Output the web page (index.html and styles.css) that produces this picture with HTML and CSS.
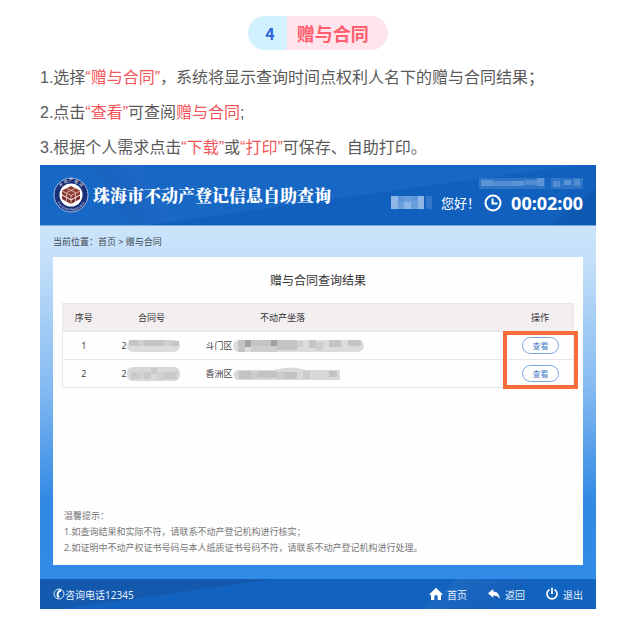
FILE: index.html
```html
<!DOCTYPE html>
<html lang="zh-CN">
<head>
<meta charset="utf-8">
<meta name="viewport" content="width=device-width, initial-scale=1">
<title>赠与合同</title>
<link rel="stylesheet" href="styles.css">
</head>
<body>
<main class="article">
  <h1 class="step"><span class="step-number">4</span><span class="step-name">赠与合同</span></h1>
  <div class="steps">
    <p>1.选择<em>“赠与合同”</em>，系统将显示查询时间点权利人名下的赠与合同结果；</p>
    <p>2.点击<em>“查看”</em>可查阅<em>赠与合同</em>;</p>
    <p>3.根据个人需求点击<em>“下载”</em>或<em>“打印”</em>可保存、自助打印。</p>
  </div>

  <section class="kiosk">
    <header class="topbar">
      <svg class="emblem" viewBox="0 0 36 36" aria-hidden="true">
        <defs>
          <path id="arc-top" d="M5.2 19.500a12.900 12.900 0 1 1 25.600 0"/>
          <path id="arc-bottom" d="M2.600 20.500a15.600 15.600 0 0 0 30.800 0"/>
        </defs>
        <circle cx="18" cy="18" r="17" fill="#1b2f78" stroke="#9fb8e6" stroke-width="1"/>
        <circle cx="18" cy="18" r="11.500" fill="#fff"/>
        <text class="emblem-cn"><textPath href="#arc-top" startOffset="50%" text-anchor="middle">不 动 产 登 记</textPath></text>
        <text class="emblem-en"><textPath href="#arc-bottom" startOffset="50%" text-anchor="middle">Real Estate Registration</textPath></text>
        <path d="M9 13.500l9-4.500 9 4.500v4l-9 5-9-5z" fill="#8c3a33"/>
        <path d="M9 18.500l9 5 9-5v3.500l-9 5-9-5z" fill="#7d2f2c"/>
        <path d="M14 11.500l8.500 4.200M22 11.500l-8.500 4.200M9 14l9 4.500 9-4.500M18 18.500V27M13.500 16.500v8M22.500 16.500v8" fill="none" stroke="#f5dfd6" stroke-width=".7"/>
      </svg>
      <h2 class="brand">珠海市不动产登记信息自助查询</h2>
      <div class="session">
        <svg class="session-date" viewBox="0 0 104 11" aria-hidden="true">
          <path fill="#669ddb" d="M0 0h104v11H0z" opacity=".35"/>
          <path fill="#9cc2ec" d="M2 2h12v6H2zM32 3h13v5H32zM58 0h7v8h-7zM85 2h7v5h-7z" opacity=".4"/>
          <path fill="#86b1e4" d="M14 3h18v5H14zM46 2h12v5H46zM74 3h7v6h-7zM95 1h6v7h-6z" opacity=".4"/>
          <path fill="#1767c2" d="M66 0h6v11h-6z"/>
        </svg>
        <div class="session-row">
          <svg class="session-name" viewBox="0 0 42 13" aria-hidden="true">
            <path fill="#6a9edc" d="M0 0h33v13H0z"/>
            <path fill="#8eb7e7" d="M0 0h7v13H0zM13 6h7v7h-7zM27 0h6v13h-6z"/>
            <path fill="#4f8ed5" d="M7 0h6v6H7zM20 0h7v5h-7zM35 0h6v13h-6z" opacity=".5"/>
          </svg>
          <span class="greeting">您好！</span>
          <svg class="clock" viewBox="0 0 18 18" aria-hidden="true"><circle cx="9" cy="9" r="7.500"/><path d="M8.500 4.500v5h5"/></svg>
          <time class="timer">00:02:00</time>
        </div>
      </div>
    </header>

    <div class="stage">
      <nav class="crumbs">当前位置：<a href="#">首页</a> &gt; 赠与合同</nav>
      <section class="panel">
        <h3 class="panel-title">赠与合同查询结果</h3>
        <div class="results">
          <table>
            <thead>
              <tr><th class="col-index">序号</th><th class="col-number">合同号</th><th class="col-place">不动产坐落</th><th class="col-action">操作</th></tr>
            </thead>
            <tbody>
              <tr>
                <td class="col-index">1</td>
                <td class="col-number"><span class="masked">2<svg width="54" height="14" viewBox="0 0 54 14" aria-hidden="true"><rect x="0" y="1" width="53" height="12" rx="6" fill="#dcdcdc"/><path fill="#c5c5c5" d="M2 1h9v6H2zM17 1h20v6H17zM44 2h8v5h-8z"/><path fill="#d0d0d0" d="M11 1h6v6h-6zM37 1h7v6h-7z"/></svg></span></td>
                <td class="col-place"><span class="masked">斗门区<svg width="134" height="14" viewBox="0 0 134 14" aria-hidden="true"><rect x="0" y="1" width="131" height="12" rx="6" fill="#dcdcdc"/><path fill="#c4c4c4" d="M5 1h7v12H5zM18 1h20v6H18zM44 1h20v10H44zM76 1h7v8h-7zM96 1h12v7H96zM115 1h13v6h-13z"/><path fill="#a2a2a2" d="M12 1h6v7h-6zM38 1h6v7h-6z"/><path fill="#cecece" d="M18 7h26v6H18zM64 2h6v6h-6zM83 3h7v9h-7z"/></svg></span></td>
                <td class="col-action"><button type="button" class="view">查看</button></td>
              </tr>
              <tr>
                <td class="col-index">2</td>
                <td class="col-number"><span class="masked">2<svg width="54" height="14" viewBox="0 0 54 14" aria-hidden="true"><rect x="0" y="0" width="53" height="14" rx="6" fill="#d8d8d8"/><path fill="#c9c9c9" d="M4 5h7v7H4zM17 5h7v7h-7zM24 1h6v6h-6zM37 5h13v7H37z"/><path fill="#d0d0d0" d="M11 4h6v8h-6zM30 6h7v7h-7z"/></svg></span></td>
                <td class="col-place"><span class="masked">香洲区<svg width="110" height="14" viewBox="0 0 110 14" aria-hidden="true"><path d="M4 3h37q17-5 32 0h34v10H4q-7-5 0-10z" fill="#d9d9d9"/><path fill="#c3c3c3" d="M6 4h12v8H6zM25 4h19v7H25zM51 5h13v7H51zM96 4h8v6h-8z"/><path fill="#cbcbcb" d="M18 5h7v7h-7zM44 5h7v7h-7zM70 4h7v8h-7z"/></svg></span></td>
                <td class="col-action"><button type="button" class="view">查看</button></td>
              </tr>
            </tbody>
          </table>
          <div class="marker"></div>
        </div>
        <div class="hints">
          <p>温馨提示：</p>
          <p>1.如查询结果和实际不符，请联系不动产登记机构进行核实；</p>
          <p>2.如证明中不动产权证书号码与本人纸质证书号码不符，请联系不动产登记机构进行处理。</p>
        </div>
      </section>
    </div>

    <footer class="bottombar">
      <span class="hotline"><svg width="12" height="12" viewBox="0 0 12 12" aria-hidden="true"><circle cx="6" cy="6" r="5" fill="none" stroke="#dcebfb"/><path d="M6.300 1.600l2 .5-.5 2-1.300-.1q-1.300 2-1 3.600l1.200.6-1 1.900Q3.300 9.400 3.500 6.800 4 3.500 6.300 1.600z" fill="#fff"/></svg>咨询电话12345</span>
      <nav class="actions">
        <a href="#"><svg width="14" height="14" viewBox="0 0 14 14" aria-hidden="true"><path fill="#fff" d="M7 .8L13.600 7.200l-.9 1-.7-.5V13H8.700V9.600a1.700 1.700 0 0 0-3.400 0V13H2V7.700l-.7.5-.9-1z"/></svg>首页</a>
        <a href="#"><svg width="14" height="14" viewBox="0 0 14 14" aria-hidden="true"><path fill="#fff" d="M1 6.300L6.200 2v2.500c4 .1 6.200 2.500 6.600 7.500C11.300 9.300 9.500 8.400 6.200 8.400v2.300z"/></svg>返回</a>
        <a href="#"><svg width="14" height="14" viewBox="0 0 14 14" aria-hidden="true"><path fill="none" stroke="#fff" stroke-width="1.700" stroke-linecap="round" d="M7 1.300v5.200M4 2.900a5 5 0 1 0 6 0"/></svg>退出</a>
      </nav>
    </footer>
  </section>
</main>
</body>
</html>
```
FILE: styles.css
```css
* {
  box-sizing: border-box;
}

body {
  margin: 0;
  background: #fff;
  color: #595959;
  font-family: "Liberation Sans", "Noto Sans CJK SC", sans-serif;
}

h1, h2, h3, p {
  margin: 0;
}

a {
  color: inherit;
  text-decoration: none;
}

svg {
  display: block;
  flex: none;
}

.article {
  padding: 16px 40px;
}

.step {
  display: flex;
  width: fit-content;
  margin: 0 auto 10px;
  border-radius: 17px;
  overflow: hidden;
  background: #ffe4ec;
  font-family: "Noto Sans CJK SC", sans-serif;
  font-size: 18px;
  line-height: 34px;
}

.step-number {
  padding: 0 12px 0 17px;
  border-radius: 0 0 4px 0;
  background: #d2f1ff;
  color: #2f63d8;
  font-size: 16px;
}

.step-name {
  padding: 0 19px 0 10px;
  color: #ff5f6e;
}

.steps {
  font-size: 16px;
  line-height: 35px;
}

.steps em {
  color: #f2555a;
  font-style: normal;
}

.kiosk {
  font-family: "Noto Sans", "Noto Sans CJK SC", sans-serif;
}

.topbar {
  display: flex;
  align-items: center;
  gap: 4px;
  height: 60px;
  padding: 0 13px;
  background:
    linear-gradient(142deg, transparent 92%, #1059b3 93%),
    linear-gradient(172deg, transparent 54%, #1160be 55%),
    linear-gradient(235deg, transparent 76%, #1c69c5 77%, #1963bf 84%, transparent 85%),
    #1767c5;
  color: #fff;
}

.emblem {
  width: 36px;
  height: 36px;
}

.emblem-cn {
  fill: #fff;
  font-size: 4px;
}

.emblem-en {
  fill: #dce6ff;
  font-size: 3px;
}

.brand {
  font-family: "Noto Serif CJK SC", "Noto Sans CJK SC", serif;
  font-size: 17px;
  font-weight: 900;
  line-height: 24px;
  white-space: nowrap;
}

.session {
  display: flex;
  flex-direction: column;
  align-items: flex-end;
  gap: 4px;
  margin-left: auto;
}

.session-date {
  width: 104px;
  height: 11px;
}

.session-row {
  display: flex;
  align-items: center;
  height: 20px;
}

.session-name {
  width: 42px;
  height: 13px;
  margin-right: 8px;
}

.greeting {
  margin-right: 4px;
  font-size: 13px;
  white-space: nowrap;
}

.clock {
  width: 18px;
  height: 18px;
  margin-right: 9px;
  fill: none;
  stroke: #fff;
  stroke-width: 2;
}

.timer {
  font-size: 18px;
  font-weight: 700;
  line-height: 20px;
}

.stage {
  padding: 0 13px 14px;
  border-top: 1px solid #7aa9e0;
  background: linear-gradient(#cbe4fa 0%, #c3dff9 10%, #86bbf1 45%, #3189e4 78%, #318ce7 100%);
}

.crumbs {
  padding: 8px 0 7px;
  color: #3d4751;
  font-size: 9px;
  line-height: 16px;
}

.panel {
  display: flex;
  flex-direction: column;
  min-height: 308px;
  padding: 12px 9px 9px;
  background: #fefefe;
}

.panel-title {
  margin-bottom: 10px;
  color: #333;
  font-size: 12px;
  font-weight: 400;
  line-height: 24px;
  text-align: center;
}

.results {
  position: relative;
  color: #444;
  font-size: 9px;
}

.results table {
  width: 100%;
  border: 1px solid #eee5e7;
  border-collapse: collapse;
  table-layout: fixed;
}

.results th,
.results td {
  height: 28px;
  padding: 0;
  border-bottom: 1px solid #e6e6e8;
  font-weight: 400;
  text-align: center;
}

.results th {
  background: #f3eff1;
  color: #333;
}

.results .col-index {
  width: 42px;
}

.results .col-number {
  width: 94px;
}

.results .col-place {
  width: 168px;
}

.results td.col-number {
  padding-left: 17px;
}

.results td.col-place {
  padding-left: 7px;
}

.results th.col-action {
  padding-right: 24px;
  text-align: right;
}

.results td.col-action {
  padding-right: 14px;
  text-align: right;
}

.masked {
  display: flex;
  align-items: center;
  white-space: nowrap;
}

.view {
  width: 37px;
  height: 17px;
  padding: 0;
  border: 1px solid #78a5e2;
  border-radius: 9px;
  background: #fff;
  color: #4a7cc8;
  font-family: inherit;
  font-size: 8px;
  line-height: 12px;
  vertical-align: middle;
}

.marker {
  position: absolute;
  top: 28px;
  right: -4px;
  bottom: -1px;
  width: 75px;
  border: 4px solid #fb6c3b;
  pointer-events: none;
}

.hints {
  margin-top: auto;
  padding-left: 2px;
  color: #777;
  font-size: 9px;
  line-height: 16px;
}

.bottombar {
  display: flex;
  align-items: center;
  justify-content: space-between;
  height: 30px;
  padding: 0 13px;
  background:
    linear-gradient(140deg, transparent 70%, #1c69c2 71%, #1560ba 82%, transparent 83%),
    linear-gradient(172deg, #1359ad 30%, transparent 31%),
    #1262bf;
  color: #e6f1fd;
  font-size: 10px;
}

.hotline,
.actions,
.actions a {
  display: flex;
  align-items: center;
}

.actions {
  gap: 20px;
}

.actions a {
  gap: 4px;
}
```
